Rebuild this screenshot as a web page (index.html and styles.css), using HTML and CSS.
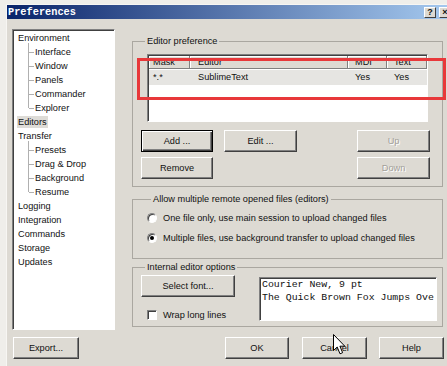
FILE: index.html
```html
<!DOCTYPE html>
<html>
<head>
<meta charset="utf-8">
<title>Preferences</title>
<link rel="stylesheet" href="styles.css">
</head>
<body>
<div class="win">
  <div class="titlebar">
    <span class="title">Preferences</span>
    <span class="tbtns"><span class="tbtn">?</span><span class="tbtn">×</span></span>
  </div>
  <div class="main">
    <ul class="tree">
      <li>Environment</li>
      <li class="child">Interface</li>
      <li class="child">Window</li>
      <li class="child">Panels</li>
      <li class="child">Commander</li>
      <li class="child last">Explorer</li>
      <li><span class="sel">Editors</span></li>
      <li>Transfer</li>
      <li class="child">Presets</li>
      <li class="child">Drag &amp; Drop</li>
      <li class="child">Background</li>
      <li class="child last">Resume</li>
      <li>Logging</li>
      <li>Integration</li>
      <li>Commands</li>
      <li>Storage</li>
      <li>Updates</li>
    </ul>
    <div class="right">
      <fieldset class="group g1">
        <legend>Editor preference</legend>
        <div class="list">
          <div class="lhead">
            <span class="c1">Mask</span><span class="c2">Editor</span><span class="c3">MDI</span><span class="c4">Text</span>
          </div>
          <div class="lrow">
            <span class="c1">*.*</span><span class="c2">SublimeText</span><span class="c3">Yes</span><span class="c4">Yes</span>
          </div>
        </div>
        <div class="btngrid">
          <span class="btn default">Add ...</span>
          <span class="btn">Edit ...</span>
          <span></span>
          <span class="btn disabled">Up</span>
          <span class="btn">Remove</span>
          <span></span>
          <span></span>
          <span class="btn disabled">Down</span>
        </div>
      </fieldset>
      <fieldset class="group g2">
        <legend>Allow multiple remote opened files (editors)</legend>
        <div class="opt"><span class="radio"></span><span>One file only, use main session to upload changed files</span></div>
        <div class="opt"><span class="radio on"><i></i></span><span>Multiple files, use background transfer to upload changed files</span></div>
      </fieldset>
      <fieldset class="group g3">
        <legend>Internal editor options</legend>
        <div class="g3row">
          <div class="g3left">
            <span class="btn fontbtn">Select font...</span>
            <div class="opt chk"><span class="check"></span><span>Wrap long lines</span></div>
          </div>
          <div class="preview">Courier New, 9 pt
The Quick Brown Fox Jumps Ove</div>
        </div>
      </fieldset>
    </div>
  </div>
  <div class="footer">
    <span class="btn fbtn export">Export...</span>
    <span class="btn fbtn ok">OK</span>
    <span class="btn fbtn">Cancel</span>
    <span class="btn fbtn">Help</span>
  </div>
  <div class="annot"></div>
  <svg class="cursor" width="13" height="21" viewBox="0 0 13 21">
    <path d="M0.5 0.5 L0.5 16.5 L4.2 13 L7 19.8 L9.6 18.7 L6.9 12.2 L11.8 12.2 Z" fill="#fff" stroke="#000" stroke-width="1" stroke-linejoin="miter"/>
  </svg>
</div>
</body>
</html>
```
FILE: styles.css
```css
html, body {
  margin: 0;
  padding: 0;
}
body {
  background: #efeeea;
  overflow: hidden;
  font-family: "Liberation Sans", Arial, sans-serif;
  font-size: 9.2px;
  color: #111;
  width: 447px;
  height: 366px;
}
.win {
  position: relative;
  margin: 4px 0 0 6px;
  width: 446px;
  height: 362px;
  box-sizing: border-box;
  border-left: 1px solid #f7f6f3;
  border-top: 1px solid #f7f6f3;
  background: #dddad3;
}
.titlebar {
  height: 14px;
  background: linear-gradient(to right, #0a246a, #a6caf0);
  display: flex;
  align-items: center;
  justify-content: space-between;
  padding: 0 1px 0 1px;
}
.title {
  font-family: "Liberation Mono", monospace;
  font-weight: bold;
  font-size: 10.3px;
  color: #fff;
  line-height: 14px;
}
.tbtns {
  display: flex;
  gap: 3px;
}
.tbtn {
  width: 12px;
  height: 11px;
  box-sizing: border-box;
  background: #dddad3;
  border: 1px solid;
  border-color: #fff #404040 #404040 #fff;
  font-weight: bold;
  font-size: 9px;
  line-height: 9px;
  text-align: center;
}
.main {
  display: flex;
  gap: 17px;
  padding: 10px 0 0 5px;
}
.tree {
  width: 103px;
  height: 301px;
  box-sizing: border-box;
  margin: 0;
  padding: 1px 0 0;
  list-style: none;
  background: #fff;
  border: 1px solid;
  border-color: #808080 #fff #fff #808080;
  box-shadow: inset 1px 1px 0 #404040;
}
.tree li {
  position: relative;
  height: 14px;
  line-height: 14px;
  padding-left: 5px;
  white-space: nowrap;
}
.tree li.child {
  padding-left: 22px;
}
.tree li.child::before {
  content: "";
  position: absolute;
  left: 15px;
  top: -2px;
  bottom: 0;
  border-left: 1px solid #b0b0b0;
}
.tree li.child.last::before {
  bottom: 7px;
}
.tree li.child::after {
  content: "";
  position: absolute;
  left: 16px;
  top: 7px;
  width: 5px;
  border-top: 1px solid #b0b0b0;
}
.tree .sel {
  background: #dedcd7;
  padding: 1px 1px;
  margin-left: -1px;
}
.right {
  width: 311px;
  padding-top: 7px;
  display: flex;
  flex-direction: column;
}
.group {
  margin: 0;
  min-width: 0;
  border: 1px solid #aaa7a0;
}
.group legend {
  margin-left: 4px;
  padding: 0 2px;
  line-height: 11px;
}
.g1 {
  padding: 7px 12px 7px 8px;
}
.list {
  height: 68px;
  box-sizing: border-box;
  margin: 0 2px 0 6px;
  padding: 1px 0 0 1px;
  background: #fff;
  border: 1px solid;
  border-color: #808080 #fff #fff #808080;
  box-shadow: inset 1px 1px 0 #404040;
  overflow: hidden;
}
.lhead, .lrow {
  display: flex;
  white-space: nowrap;
}
.lhead span {
  height: 13px;
  line-height: 12px;
  box-sizing: border-box;
  background: #dddad3;
  border-right: 1px solid #808080;
  border-bottom: 1px solid #808080;
  box-shadow: inset 1px 1px 0 #fff;
}
.lrow {
  margin-top: 1px;
  height: 15px;
  line-height: 15px;
  background: #e6e5e2;
}
.c1 { width: 41px; padding-left: 4px; box-sizing: border-box; }
.c2 { width: 158px; padding-left: 8px; box-sizing: border-box; }
.c3 { width: 39px; padding-left: 7px; box-sizing: border-box; }
.c4 { flex: 1; padding-left: 7px; box-sizing: border-box; }
.btngrid {
  margin-top: 8px;
  display: grid;
  grid-template-columns: 72px 73px 1fr 73px;
  grid-template-rows: 22px 22px;
  column-gap: 11px;
  row-gap: 5px;
}
.btn {
  display: flex;
  align-items: center;
  justify-content: center;
  height: 22px;
  box-sizing: border-box;
  background: #dddad3;
  border: 1px solid;
  border-color: #fff #404040 #404040 #fff;
  box-shadow: inset -1px -1px 0 #808080;
  white-space: nowrap;
}
.btn.default {
  border-color: #000;
  box-shadow: inset 1px 1px 0 #fff, inset -1px -1px 0 #404040, inset -2px -2px 0 #808080;
}
.btn.disabled {
  color: #a29f99;
  text-shadow: 1px 1px 0 #fff;
}
.g2 {
  margin-top: 7px;
  padding: 3px 12px 10px 14px;
}
.opt {
  display: flex;
  align-items: center;
  gap: 6px;
  height: 20px;
  white-space: nowrap;
}
.radio {
  width: 10px;
  height: 10px;
  box-sizing: border-box;
  border-radius: 50%;
  border: 1px solid;
  border-color: #808080 #fff #fff #808080;
  box-shadow: inset 1px 1px 0 #404040;
  background: #fff;
  display: flex;
  align-items: center;
  justify-content: center;
}
.radio i {
  width: 4px;
  height: 4px;
  border-radius: 50%;
  background: #000;
}
.g3 {
  margin-top: 3px;
  padding: 2px 5px 4px 8px;
}
.g3row {
  display: flex;
}
.g3left {
  display: flex;
  flex-direction: column;
}
.fontbtn {
  width: 94px;
}
.chk {
  margin-top: 11px;
  height: 14px;
  padding-left: 6px;
}
.check {
  width: 10px;
  height: 10px;
  box-sizing: border-box;
  border: 1px solid;
  border-color: #808080 #fff #fff #808080;
  box-shadow: inset 1px 1px 0 #404040;
  background: #fff;
}
.preview {
  margin: 2px 0 0 24px;
  width: 178px;
  height: 44px;
  box-sizing: border-box;
  padding: 0 0 0 2px;
  background: #fff;
  border: 1px solid;
  border-color: #808080 #fff #fff #808080;
  box-shadow: inset 1px 1px 0 #404040;
  font-family: "Liberation Mono", "Courier New", monospace;
  font-size: 9.9px;
  line-height: 13px;
  white-space: pre;
  overflow: hidden;
}
.footer {
  display: flex;
  gap: 12px;
  margin-top: 7px;
  padding: 0 8px 0 6px;
}
.fbtn {
  width: 65px;
}
.export {
  width: 66px;
}
.ok {
  margin-left: auto;
  width: 64px;
  margin-right: 1px;
}
.annot {
  position: absolute;
  left: 130px;
  top: 53px;
  width: 309px;
  height: 42px;
  box-sizing: border-box;
  border: 3px solid #e8383a;
}
.cursor {
  position: absolute;
  left: 326px;
  top: 329px;
}
```
